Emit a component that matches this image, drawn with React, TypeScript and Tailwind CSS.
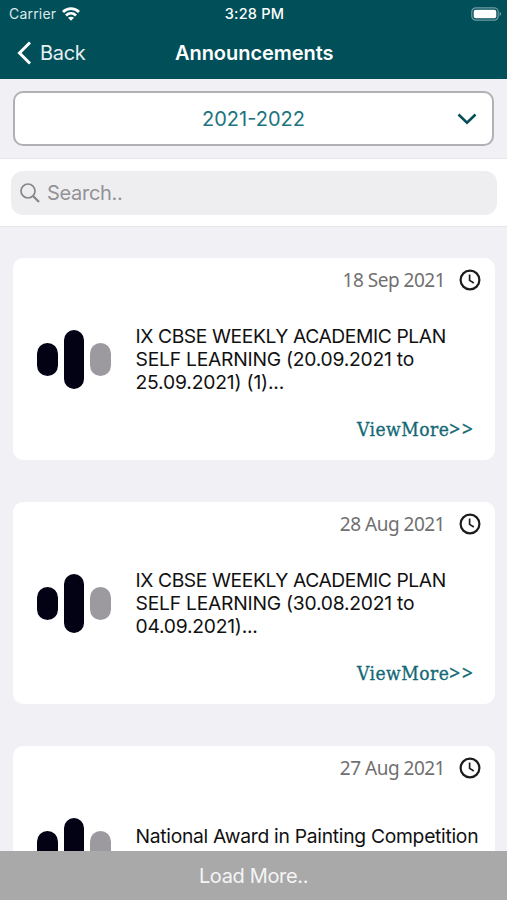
type Line = {
  text: string;
  tracking: string;
};

type Announcement = {
  date: string;
  lines: Line[];
};

const announcements: Announcement[] = [
  {
    date: '18 Sep 2021',
    lines: [
      { text: 'IX CBSE WEEKLY ACADEMIC PLAN', tracking: 'tracking-[-0.42px]' },
      { text: 'SELF LEARNING (20.09.2021 to', tracking: 'tracking-[-0.24px]' },
      { text: '25.09.2021) (1)...', tracking: 'tracking-[-0.18px]' },
    ],
  },
  {
    date: '28 Aug 2021',
    lines: [
      { text: 'IX CBSE WEEKLY ACADEMIC PLAN', tracking: 'tracking-[-0.42px]' },
      { text: 'SELF LEARNING (30.08.2021 to', tracking: 'tracking-[-0.24px]' },
      { text: '04.09.2021)...', tracking: 'tracking-[-0.24px]' },
    ],
  },
  {
    date: '27 Aug 2021',
    lines: [{ text: 'National Award in Painting Competition', tracking: 'tracking-[-0.29px]' }],
  },
];

const WifiIcon = () => (
  <svg viewBox="0 0 18 14" className="w-[18px] h-[14px]" fill="none" stroke="#fff" strokeWidth={2.8}>
    <path d="M1 5C5.6 0.5 12.4 0.5 17 5" />
    <path d="M4 8.5C6.9 5.7 11.1 5.7 14 8.5" />
    <path d="M9 13.8L6 10.8C7.7 9.3 10.3 9.3 12 10.8Z" fill="#fff" stroke="none" />
  </svg>
);

const BatteryIcon = () => (
  <svg viewBox="0 0 31 14" className="w-[31px] h-[14px]" fill="none">
    <rect x="0.8" y="0.8" width="26.4" height="12.4" rx="4" stroke="#6f9da3" strokeWidth="1.2" />
    <rect x="2.7" y="2.7" width="22.6" height="8.6" rx="2" fill="#fff" />
    <path d="M28.6 4.8C30.6 5.6 30.6 8.4 28.6 9.2Z" fill="#6f9da3" />
  </svg>
);

const ClockIcon = () => (
  <svg viewBox="0 0 22 22" className="w-[22px] h-[22px]" fill="none" stroke="#1c1c1c">
    <circle cx="11" cy="11" r="9.4" strokeWidth="2.2" />
    <path d="M10.6 5.6V11.4L14.8 14" strokeWidth="1.7" />
  </svg>
);

const Card = ({ date, lines }: Announcement) => (
  <article className="h-[202px] shrink-0 rounded-[10px] bg-white flex flex-col">
    <div className="h-[43px] pr-[14px] flex items-center justify-end gap-[14px]">
      <span className="pt-[2px] font-['Noto_Sans',sans-serif] text-[19px] tracking-[-0.5px] text-[#707070]">{date}</span>
      <ClockIcon />
    </div>
    <div className="h-[116px] pl-6 flex items-center">
      <div className="w-[98.5px] flex items-center gap-[6px] shrink-0">
        <span className="w-[20.7px] h-[33px] rounded-full bg-[#030214]" />
        <span className="w-[20.7px] h-[59px] rounded-full bg-[#030214]" />
        <span className="w-[20.7px] h-[33px] rounded-full bg-[#9c9a9f]" />
      </div>
      <div className="min-h-[47px] pt-px text-[19.3px] leading-[23.3px] text-[#111] whitespace-nowrap">
        {lines.map((line) => (
          <p key={line.text} className={line.tracking}>{line.text}</p>
        ))}
      </div>
    </div>
    <a className="pr-5 flex justify-end items-center font-['DejaVu_Serif_Condensed','DejaVu_Serif',serif] text-[19px] leading-6 tracking-[0.5px] text-[#126874] [-webkit-text-stroke:0.3px_#126874]">
      ViewMore
      <span className="font-['Noto_Sans',sans-serif] tracking-[2px]">&gt;&gt;</span>
    </a>
  </article>
);

export default function App() {
  return (
    <main className="h-[900px] w-[507px] overflow-hidden bg-[#f0f0f5] font-['Inter',sans-serif] flex flex-col">
      <header className="h-[79px] shrink-0 bg-[#004f59] text-white">
        <div className="h-[27px] pl-[9px] pr-[7px] grid grid-cols-3 items-center text-[14px]">
          <div className="flex items-center gap-[6px] text-[#dce9ea]">
            <span className="tracking-[0.2px]">Carrier</span>
            <WifiIcon />
          </div>
          <span className="text-center font-medium text-[14.5px] tracking-[0.25px]">3:28 PM</span>
          <div className="flex justify-end -mr-[2px]">
            <BatteryIcon />
          </div>
        </div>
        <div className="h-[52px] pl-[17px] pr-4 grid grid-cols-3 items-center text-[20px]">
          <a className="flex items-center gap-[9px] text-[#e6f0f1]">
            <svg viewBox="0 0 14 24" className="w-[14px] h-6" fill="none" stroke="#fff" strokeWidth={3}>
              <path d="M13 1.5L2.5 12L13 22.5" />
            </svg>
            <span className="tracking-[-0.3px]">Back</span>
          </a>
          <h1 className="text-center font-semibold tracking-[-0.05px]">Announcements</h1>
        </div>
      </header>

      <section className="h-20 shrink-0 px-[13px] pt-3 border-b border-[#e6e6ea]">
        <button className="w-full h-[55px] rounded-[10px] border-2 border-[#b1b1b3] bg-white grid grid-cols-[1fr_auto_1fr] items-center px-[15px]">
          <span className="col-start-2 text-[20px] text-[#1c747d]">2021-2022</span>
          <svg viewBox="0 0 20 12" className="w-5 h-3 justify-self-end" fill="none" stroke="#064e59" strokeWidth={2.6}>
            <path d="M1.5 1.5L10 9.7L18.5 1.5" />
          </svg>
        </button>
      </section>

      <section className="h-[68px] shrink-0 bg-white pl-[11px] pr-[10px] pt-3 border-b border-[#e6e6ea]">
        <div className="h-11 rounded-xl bg-[#eeeef0] flex items-center pl-[9px] gap-[7px] text-[20px] text-[#929296]">
          <svg viewBox="0 0 20 20" className="w-5 h-5" fill="none" stroke="#87878b" strokeWidth={1.7}>
            <circle cx="8" cy="8" r="7" />
            <path d="M13 13L19 19" strokeWidth={2.3} />
          </svg>
          <span className="tracking-[-0.3px]">Search..</span>
        </div>
      </section>

      <section className="flex-1 min-h-0 overflow-hidden pl-[13px] pr-3 pt-[31px] flex flex-col gap-[42px]">
        {announcements.map((item) => (
          <Card key={item.date} {...item} />
        ))}
      </section>

      <button className="h-[49px] shrink-0 bg-[#a9a9a9] pt-px text-[20px] tracking-[-0.35px] text-[#f5f5f5]">Load More..</button>
    </main>
  );
}
